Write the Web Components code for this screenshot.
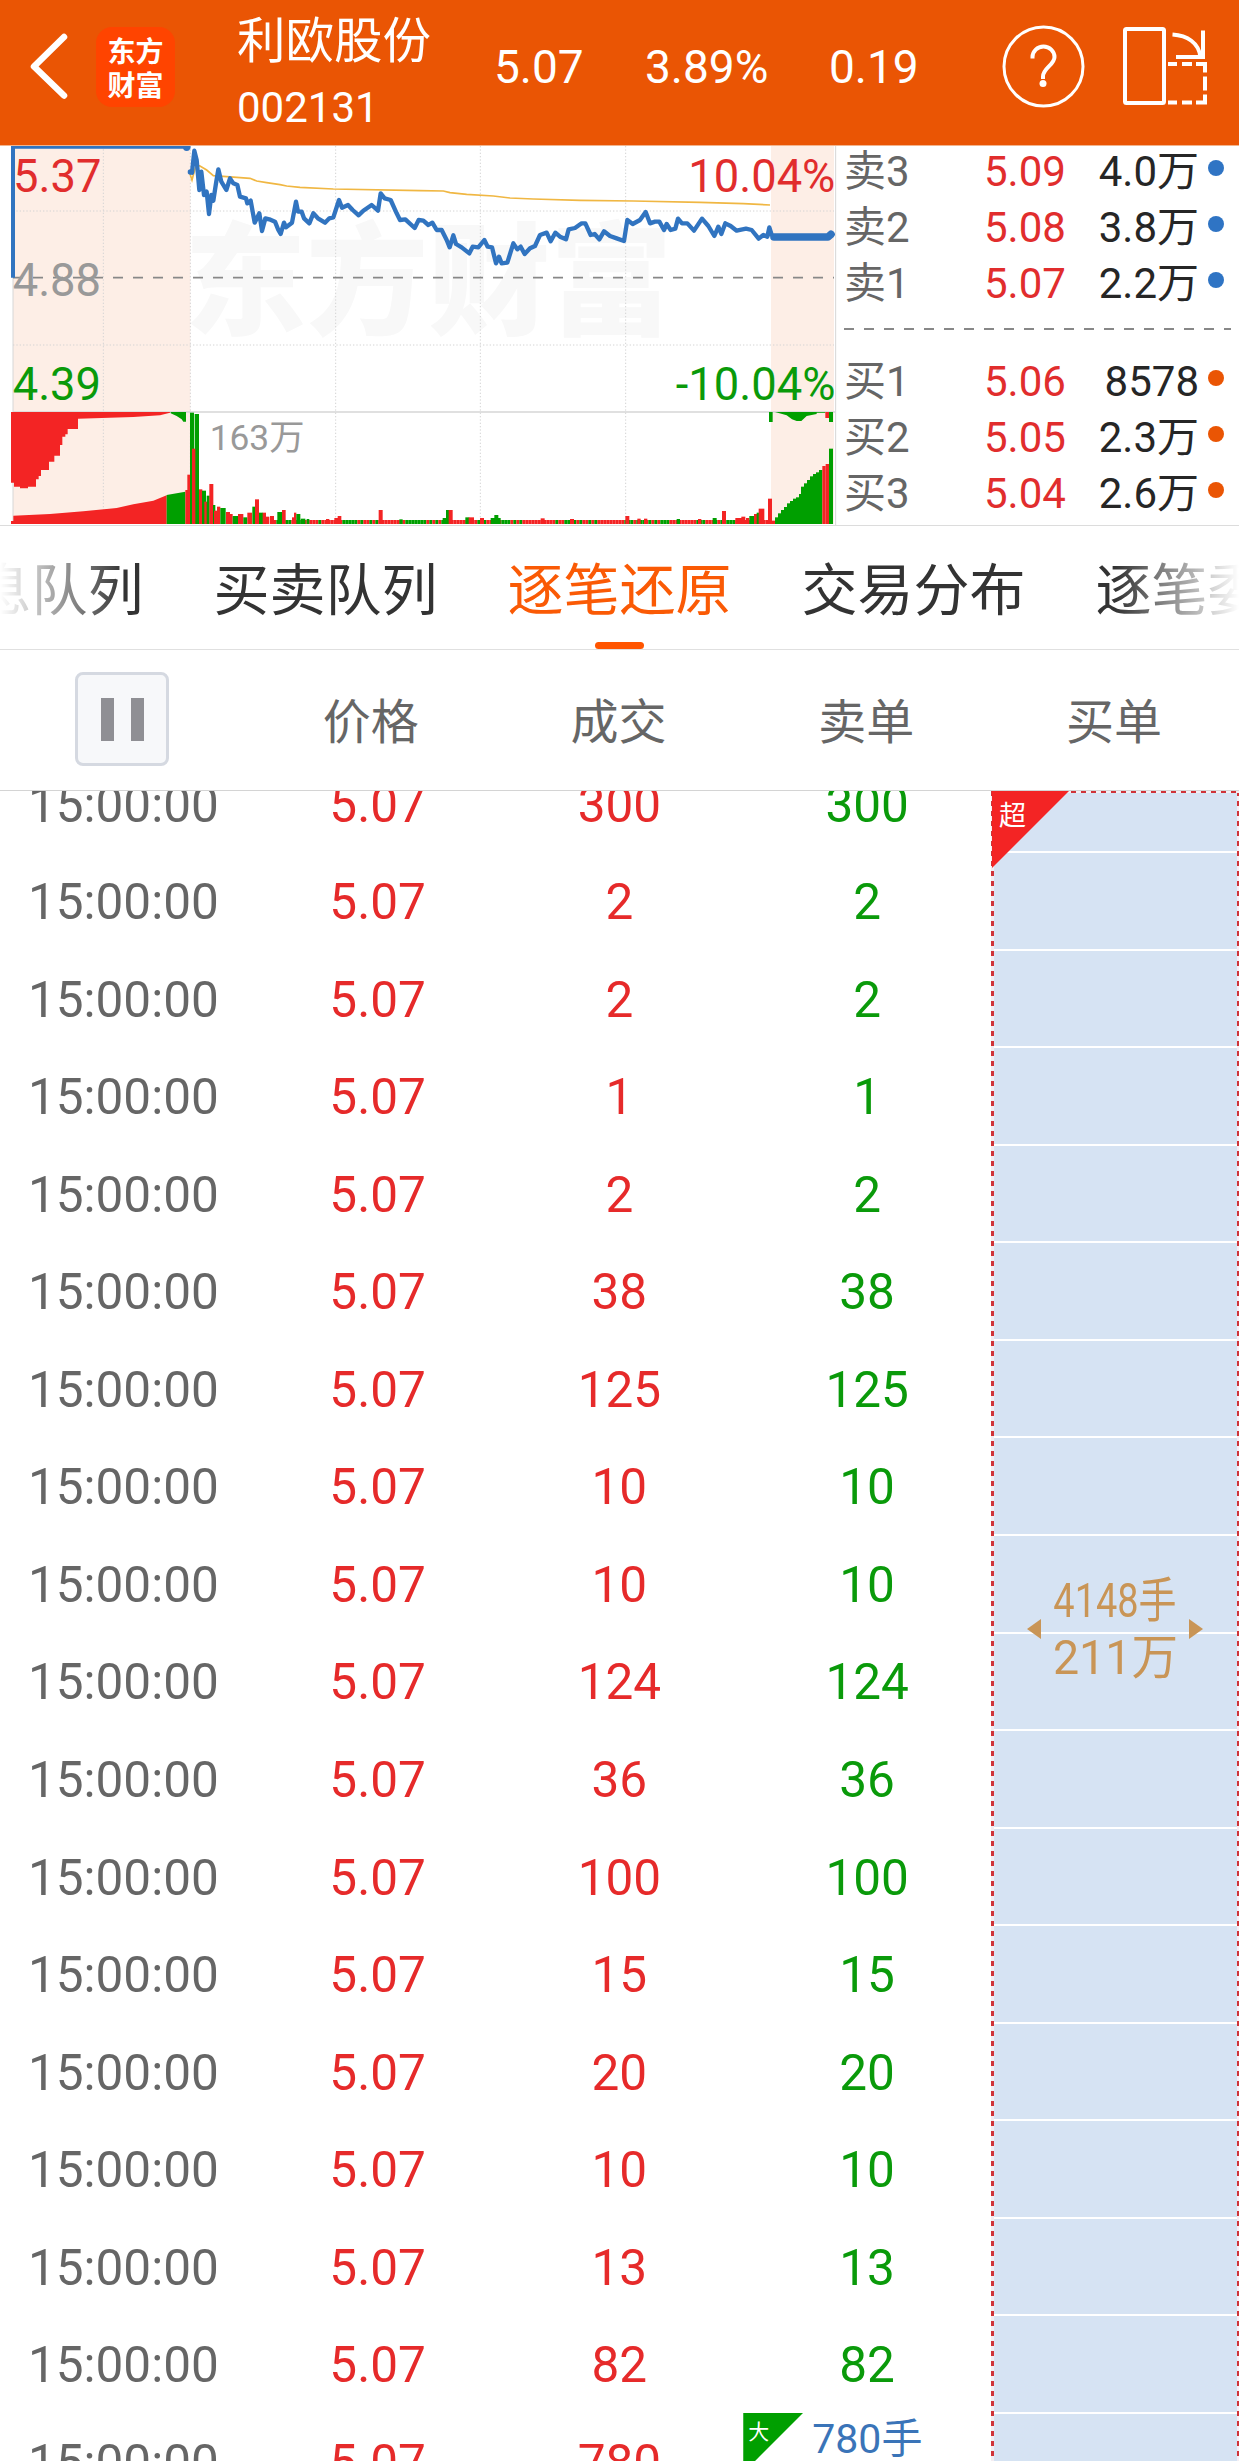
<!DOCTYPE html>
<html lang="zh-CN">
<head>
<meta charset="utf-8">
<title>利欧股份 002131</title>
<style>
  body {
    margin: 0;
    width: 1239px;
    height: 2461px;
    overflow: hidden;
    background: #fff;
    color: #666;
    font-family: Roboto, "Noto Sans CJK SC", sans-serif;
  }

  .quote {
    display: flex;
    height: 379px;
    border-bottom: 1px solid #dcdcdc;
  }
</style>
</head>
<body>
<stock-header code="002131" price="5.07" percent="3.89%" change="0.19">利欧股份</stock-header>
<div class="quote">
  <intraday-chart></intraday-chart>
  <order-book>
    <order-level slot="sell" price="5.09" volume="4.0万">卖3</order-level>
    <order-level slot="sell" price="5.08" volume="3.8万">卖2</order-level>
    <order-level slot="sell" price="5.07" volume="2.2万">卖1</order-level>
    <order-level slot="buy" side="buy" price="5.06" volume="8578">买1</order-level>
    <order-level slot="buy" side="buy" price="5.05" volume="2.3万">买2</order-level>
    <order-level slot="buy" side="buy" price="5.04" volume="2.6万">买3</order-level>
  </order-book>
</div>
<tab-strip>
  <span>息队列</span>
  <span>买卖队列</span>
  <span class="active">逐笔还原</span>
  <span>交易分布</span>
  <span>逐笔委</span>
</tab-strip>
<table-head></table-head>
<trade-list time="15:00:00" price="5.07" items="[300,2,2,1,2,38,125,10,10,124,36,100,15,20,10,13,82,780]">
  <buy-order hands="4148手" amount="211万">超</buy-order>
</trade-list>

<script>
customElements.define(
  "stock-header",
  class extends HTMLElement {
    constructor() {
      super();
      this.attachShadow({ mode: "open" }).innerHTML = `
        <style>
        :host {
          display: grid;
          grid-template-columns: 96px 141px 257px 151px 184px 173px 121px 1fr;
          align-items: center;
          box-sizing: border-box;
          height: 146px;
          padding-bottom: 12px;
          border-bottom: 1px solid #f3b48c;
          background: #ea5504;
          color: #fff;
          font-size: 46px;
          line-height: 54px;
          white-space: nowrap;
        }

        svg {
          display: block;
          fill: none;
          stroke: #fff;
        }

        .logo {
          display: flex;
          flex-direction: column;
          align-items: center;
          justify-content: center;
          width: 79px;
          height: 80px;
          border-radius: 16px;
          background: #ff4400;
          font: 700 28px/34px "Noto Sans CJK SC", sans-serif;
        }

        .name {
          display: flex;
          flex-direction: column;
          gap: 14px;
          padding-top: 11px;
          font-size: 48.500px;
          line-height: 56px;
        }

        .name small {
          font-size: 42px;
          line-height: 47px;
        }
        </style>
        <svg width="96" height="80"><path d="M64 10 L34 39.500 L64 68.500" stroke-width="6.500" stroke-linecap="round" stroke-linejoin="round"/></svg>
        <div class="logo"><span>东方</span><span>财富</span></div>
        <div class="name"><slot></slot><small>${this.getAttribute("code")}</small></div>
        <span>${this.getAttribute("price")}</span>
        <span>${this.getAttribute("percent")}</span>
        <span>${this.getAttribute("change")}</span>
        <svg width="84" height="84" stroke-width="3">
          <circle cx="41.500" cy="41.500" r="39.500"/>
          <path d="M30.500 33.500 V32 A11 10.500 0 0 1 52.500 32 C52.500 40 41 43 41 51.500 V54" stroke-width="4"/>
          <circle cx="41" cy="58.500" r="3.500" fill="#fff" stroke="none"/>
        </svg>
        <svg width="88" height="80" stroke-width="4">
          <rect x="2" y="2" width="39" height="74" rx="1.500"/>
          <path d="M49.500 7.500 C64 8.500 76 15.500 77.500 30.500 M53 30 H80 V3.500"/>
          <path d="M45 37 H54 M59 37 H69 M73 37 H82 V45.500 M82 49.500 V63.500 M82 67.500 V75.500 H73 M69 75.500 H59 M54 75.500 H45"/>
        </svg>
      `;
    }
  }
);

// chart units are a third of a pixel
const PRICE = `570,95 576,98 583,32 590,60 598,150 604,95 612,165 620,155 627,222 634,165 640,182
648,130 655,88 664,125 679,150 690,115 700,130 712,135 720,170 738,175 742,190 752,182 764,248
778,220 786,273 796,235 808,238 825,245 835,270 842,282 852,248 858,262 876,248 888,185 894,215
905,215 912,235 928,250 940,220 955,236 975,248 988,235 1000,232 1017,180 1026,203 1044,195
1058,210 1076,226 1090,212 1115,195 1134,212 1142,160 1154,175 1172,180 1190,220 1200,240
1216,238 1244,264 1256,240 1270,242 1285,255 1297,248 1310,270 1325,270 1340,300 1349,322
1360,286 1368,312 1385,322 1408,340 1418,320 1435,322 1453,300 1463,320 1476,322 1488,370
1497,350 1505,370 1522,368 1540,310 1552,328 1562,320 1574,342 1590,325 1605,318 1620,285
1640,278 1652,304 1666,278 1680,290 1698,298 1706,268 1725,264 1745,250 1756,250 1772,285
1784,282 1798,298 1812,274 1830,288 1850,295 1872,303 1882,240 1898,252 1920,240 1937,216
1950,250 1965,245 1978,245 1992,270 2000,252 2012,270 2026,266 2034,236 2046,250 2062,250
2082,272 2106,236 2125,258 2143,288 2155,260 2164,282 2176,250 2192,258 2210,272 2238,266
2255,270 2276,296 2290,285 2302,290 2308,262 2316,288`;

const AVERAGE = `568,95 576,120 584,90 590,75 600,78 620,90 640,107 680,110 750,115 770,123 800,128
840,134 860,138 900,142 1000,147 1260,152 1330,153 1350,158 1400,163 1480,168 1530,174 1600,177
1740,181 1900,183 2100,187 2230,191 2310,195`;

// x, top, width, rising
const BARS = [
  [556, 1050, 8, 1], [562, 1004, 9, 1], [570, 818, 12, 0], [584, 822, 13, 0], [576, 926, 10, 1],
  [597, 1048, 10, 1], [606, 1052, 12, 0], [613, 1085, 8, 1], [620, 1067, 9, 0], [628, 1032, 12, 1],
  [639, 1095, 7, 0], [642, 1112, 10, 1], [651, 1100, 10, 1], [661, 1104, 16, 0], [678, 1116, 12, 1],
  [690, 1122, 8, 1], [698, 1128, 16, 0], [714, 1122, 16, 1], [730, 1132, 12, 0], [742, 1118, 14, 1],
  [757, 1100, 9, 0], [765, 1078, 12, 1], [777, 1118, 12, 0], [788, 1118, 10, 1], [798, 1130, 10, 1],
  [810, 1128, 12, 1], [832, 1116, 14, 0], [846, 1110, 11, 1], [876, 1132, 12, 1], [882, 1118, 7, 1],
  [889, 1122, 12, 0], [902, 1136, 14, 0], [920, 1137, 8, 0], [978, 1137, 10, 1], [1003, 1134, 12, 1],
  [1013, 1128, 11, 1], [1136, 1110, 12, 1], [1198, 1138, 10, 0], [1328, 1134, 12, 0], [1338, 1110, 10, 0],
  [1346, 1110, 12, 1], [1396, 1132, 12, 0], [1406, 1132, 16, 1], [1440, 1134, 12, 1], [1472, 1134, 30, 0],
  [1483, 1125, 12, 0], [1622, 1135, 12, 1], [1710, 1137, 12, 1], [1876, 1128, 12, 1], [1912, 1136, 10, 1],
  [1932, 1136, 10, 1], [2030, 1137, 10, 0], [2094, 1137, 10, 1], [2138, 1134, 12, 0], [2166, 1113, 12, 1],
  [2206, 1134, 20, 1], [2224, 1130, 12, 1], [2238, 1134, 10, 1], [2248, 1128, 14, 0], [2262, 1122, 12, 1],
  [2270, 1118, 8, 0], [2276, 1106, 17, 1], [2304, 1076, 12, 1], [2315, 1142, 10, 1],
  [2325, 1132, 10, 0], [2334, 1120, 10, 0], [2343, 1110, 10, 0], [2352, 1101, 10, 0], [2361, 1090, 10, 0],
  [2370, 1083, 10, 0], [2379, 1076, 10, 0], [2388, 1072, 10, 0], [2397, 1062, 8, 0], [2403, 1040, 10, 0],
  [2412, 1030, 10, 0], [2421, 1020, 10, 0], [2430, 1009, 10, 0], [2439, 1002, 10, 0], [2448, 997, 10, 0],
  [2457, 990, 10, 0], [2467, 978, 10, 1], [2477, 972, 10, 1], [2487, 926, 12, 0]
];

const bar = ([x, top, width, up]) =>
  `<rect x="${x}" y="${top}" width="${width}" height="${1152 - top}" class="${up ? "up" : "down"}"/>`;

// low turnover through the middle of the session
const baseBars = () => {
  const pattern = "1101001101110010110100111001011011";
  let out = "";
  for (let x = 820, i = 0; x < 2300; x += 9, i++) {
    out += bar([x, 1140, 9, pattern[(i * 5 + (i >> 3)) % pattern.length] === "1"]);
  }
  return out;
};

customElements.define(
  "intraday-chart",
  class extends HTMLElement {
    constructor() {
      super();
      this.attachShadow({ mode: "open" }).innerHTML = `
        <style>
        :host {
          display: block;
          width: 838px;
          height: 379px;
        }

        svg {
          display: block;
        }

        text {
          font-family: Roboto, "Noto Sans CJK SC", sans-serif;
          font-size: 136px;
        }

        .mark {
          font: 900 366px "Noto Sans CJK SC", sans-serif;
          fill: #f8f8f8;
        }

        .up { fill: #f32424; }
        .down { fill: #009f00; }
        .grid { stroke: #d4d4d4; stroke-width: 3; stroke-dasharray: 4 6; }
        .axis { stroke: #d6d6d6; stroke-width: 5; }
        .line { fill: none; stroke: #3174c0; stroke-linejoin: round; }
        </style>
        <svg width="838" height="379" viewBox="0 18 2514 1137">
          <path fill="#fdeee6" d="M39 18H571V1152H39ZM2313 18H2502V1152H2313Z"/>
          <text class="mark" x="553" y="556">东方财富</text>
          <path class="grid" d="M39 213H2502M39 615H2502M310 18V1152M571 18V1152M1007 18V1152M1441 18V1152M1877 18V1152"/>
          <path class="axis" d="M39 816H2505"/>
          <path stroke="#d6d6d6" stroke-width="3" d="M39 413V1152M2507 18V1155"/>
          <path stroke="#888" stroke-width="5" stroke-dasharray="30 30" d="M39 413H2502"/>
          <polyline points="${AVERAGE}" fill="none" stroke="#f0b743" stroke-width="5"/>
          <path class="line" stroke-width="12" d="M39 413V20H571"/>
          <circle cx="560" cy="22" r="11" fill="#3174c0"/>
          <circle cx="571" cy="96" r="8" fill="#3174c0"/>
          <polyline class="line" stroke-width="13" points="${PRICE}"/>
          <path class="line" stroke-width="23" stroke-linecap="round" d="M2322 291H2484L2493 283"/>
          <path class="up" d="M33 816V1028H42V1040H60V1045H84V1040H108V1018H116V1008H123V990H147V965H163V947H180V915H187V890H196V883H203V867H234V836L400 831L480 826L510 818V816Z"/>
          <path class="down" d="M512 816V820L530 828L545 838L550 845H558V816Z"/>
          <path class="up" d="M33 1152V1143H40V1127L150 1122L250 1114L350 1104L400 1093L460 1082L500 1066V1152Z"/>
          <path class="down" d="M500 1065L556 1055V1152H500Z"/>
          <path class="down" d="M2307 816H2318V846H2307ZM2325 816L2360 826L2376 838L2390 843H2404L2420 828L2450 822V818H2476V816ZM2487 816H2499V846H2487Z"/>
          <path class="up" d="M2476 816H2487V834H2476Z"/>
          ${baseBars()}
          ${BARS.map(bar).join("")}
          <text x="39" y="156" fill="#e12d2d">5.37</text>
          <text x="38" y="467" fill="#999">4.88</text>
          <text x="38" y="779" fill="#0a9a0a">4.39</text>
          <text x="2506" y="156" fill="#e12d2d" text-anchor="end">10.04%</text>
          <text x="2506" y="779" fill="#0a9a0a" text-anchor="end">-10.04%</text>
          <text x="629" y="930" fill="#999" style="font-size: 106px">163万</text>
        </svg>
      `;
    }
  }
);

customElements.define(
  "order-book",
  class extends HTMLElement {
    constructor() {
      super();
      this.attachShadow({ mode: "open" }).innerHTML = `
        <style>
        :host {
          display: block;
          flex: 1;
          box-sizing: border-box;
          padding: 0 8px 0 6px;
          overflow: hidden;
        }

        .sell {
          margin-top: -4px;
        }

        hr {
          height: 2px;
          margin: 18px 0 22px;
          border: 0;
          background: repeating-linear-gradient(90deg, #888 0 10px, transparent 10px 20px);
        }
        </style>
        <div class="sell"><slot name="sell"></slot></div>
        <hr>
        <slot name="buy"></slot>
      `;
    }
  }
);

customElements.define(
  "order-level",
  class extends HTMLElement {
    constructor() {
      super();
      this.attachShadow({ mode: "open" }).innerHTML = `
        <style>
        :host {
          display: grid;
          grid-template-columns: 140px 100px 115px 1fr;
          height: 56px;
          font-size: 42px;
          line-height: 59px;
          white-space: nowrap;
        }

        .price {
          color: #e12d2d;
        }

        .volume {
          color: #262626;
          text-align: right;
        }

        i {
          width: 16px;
          height: 16px;
          margin: 18px 0 0 9px;
          border-radius: 50%;
          background: #2f74c4;
        }

        :host([side="buy"]) i {
          background: #ea5504;
        }
        </style>
        <slot></slot>
        <span class="price">${this.getAttribute("price")}</span>
        <span class="volume">${this.getAttribute("volume")}</span>
        <i></i>
      `;
    }
  }
);

customElements.define(
  "tab-strip",
  class extends HTMLElement {
    constructor() {
      super();
      this.attachShadow({ mode: "open" }).innerHTML = `
        <style>
        :host {
          display: block;
          height: 123px;
          border-bottom: 1px solid #e0e0e0;
          overflow: hidden;
        }

        .tabs {
          display: flex;
          justify-content: center;
          gap: 70px;
          height: 116px;
          color: #333;
          font-size: 56px;
          line-height: 131px;
          white-space: nowrap;
          -webkit-mask: linear-gradient(90deg, transparent, #000 124px 1115px, transparent);
          mask: linear-gradient(90deg, transparent, #000 124px 1115px, transparent);
        }

        ::slotted(span) {
          flex: none;
        }

        ::slotted(.active) {
          color: #fa5a05;
        }

        .bar {
          width: 49px;
          height: 7px;
          margin: 0 auto;
          border-radius: 4px;
          background: #ff5500;
        }
        </style>
        <div class="tabs"><slot></slot></div>
        <div class="bar"></div>
      `;
    }
  }
);

customElements.define(
  "table-head",
  class extends HTMLElement {
    constructor() {
      super();
      this.attachShadow({ mode: "open" }).innerHTML = `
        <style>
        :host {
          display: grid;
          grid-template-columns: repeat(5, 1fr);
          align-items: center;
          justify-items: center;
          height: 140px;
          border-bottom: 1px solid #d4d4d4;
          font-size: 48px;
          line-height: 56px;
        }

        span {
          padding: 6px 2px 0 0;
        }

        button {
          display: flex;
          align-items: center;
          justify-content: center;
          gap: 17px;
          width: 94px;
          height: 94px;
          margin: -2px 0 0 -3px;
          padding: 0;
          border: 3px solid #d5d9e1;
          border-radius: 8px;
          background: #f7f8fa;
        }

        i {
          width: 13px;
          height: 43px;
          background: #8f8f94;
        }
        </style>
        <button><i></i><i></i></button>
        <span>价格</span>
        <span>成交</span>
        <span>卖单</span>
        <span>买单</span>
      `;
    }
  }
);

customElements.define(
  "trade-list",
  class extends HTMLElement {
    constructor() {
      super();
      this.attachShadow({ mode: "open" }).innerHTML = `
        <style>
        :host {
          display: flex;
          height: 1670px;
          overflow: hidden;
        }

        .rows {
          flex: none;
          width: 991px;
          margin-top: -36.500px;
        }

        .row {
          display: grid;
          grid-template-columns: repeat(4, 1fr);
          height: 97.560px;
          font-size: 49.500px;
          line-height: 100px;
          text-align: center;
        }

        .price, .deal {
          color: #e62a2a;
        }

        .price {
          padding-left: 12px;
        }

        .sell {
          color: #0a9a0a;
        }

        .row > :first-child {
          padding-right: 1px;
        }

        .big {
          display: flex;
          gap: 9px;
          color: #3a74b8;
          font-size: 41px;
          line-height: 53px;
        }

        .big b {
          width: 60px;
          height: 60px;
          box-sizing: border-box;
          padding-left: 5px;
          background: #009f00;
          clip-path: polygon(0 0, 100% 0, 0 100%);
          color: #fff;
          font-size: 21px;
          font-weight: 400;
          line-height: 38px;
          text-align: left;
        }
        </style>
        <div class="rows">
          ${this.items
            .map(
              (count) => `
            <div class="row">
              <span>${this.getAttribute("time")}</span>
              <span class="price">${this.getAttribute("price")}</span>
              <span class="deal">${count}</span>
              ${
                count === 780
                  ? `<span class="big"><b>大</b>780手</span>`
                  : `<span class="sell">${count}</span>`
              }
            </div>
          `
            )
            .join("")}
        </div>
        <slot></slot>
      `;
    }

    get items() {
      return JSON.parse(this.getAttribute("items") || "[]");
    }
  }
);

customElements.define(
  "buy-order",
  class extends HTMLElement {
    constructor() {
      super();
      this.attachShadow({ mode: "open" }).innerHTML = `
        <style>
        :host {
          --dash: #d03338 0 5px, #f4eef3 5px 10px;
          display: flex;
          align-items: center;
          justify-content: center;
          gap: 14px;
          position: relative;
          flex: none;
          width: 248px;
          height: 1675px;
          background:
            repeating-linear-gradient(90deg, var(--dash)) 0 0 / 100% 2px no-repeat,
            repeating-linear-gradient(var(--dash)) 0 0 / 3px 100% no-repeat,
            repeating-linear-gradient(var(--dash)) 246px 0 / 2px 100% no-repeat,
            repeating-linear-gradient(transparent 0 95.560px, #fff 95.560px 97.560px) 0 -35.500px / 100% 1800px no-repeat,
            #d6e3f3;
          color: #c99556;
          font-size: 48px;
          line-height: 57px;
        }

        .tag {
          position: absolute;
          left: 1px;
          top: 0;
          box-sizing: border-box;
          width: 77px;
          height: 77px;
          padding-left: 7px;
          background: #f32424;
          clip-path: polygon(0 0, 100% 0, 0 100%);
          color: #fff;
          font-size: 27px;
          line-height: 50px;
        }

        .text {
          display: flex;
          flex-direction: column;
          align-items: center;
          width: 120px;
          white-space: nowrap;
        }

        .hands {
          transform: scaleX(0.79);
        }

        .amount {
          transform: scaleX(0.97);
        }
        </style>
        <div class="tag"><slot></slot></div>
        <svg width="14" height="20"><path d="M0 10L14 0V20Z" fill="#c99556"/></svg>
        <div class="text">
          <span class="hands">${this.getAttribute("hands")}</span>
          <span class="amount">${this.getAttribute("amount")}</span>
        </div>
        <svg width="14" height="20"><path d="M14 10L0 0V20Z" fill="#c99556"/></svg>
      `;
    }
  }
);
</script>
</body>
</html>
